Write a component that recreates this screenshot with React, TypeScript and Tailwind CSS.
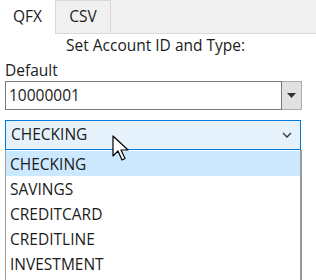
const items = ['CHECKING', 'SAVINGS', 'CREDITCARD', 'CREDITLINE', 'INVESTMENT'];

export default function App() {
  return (
    <div
      className="relative h-[280px] w-[316px] overflow-hidden bg-white text-[15.5px] text-[#1b1b1b]"
      style={{ fontFamily: '"Open Sans", "Noto Sans", sans-serif' }}
    >
      {/* Tab strip */}
      <div className="flex h-[34px] items-end border-b border-[#d9d9d9] bg-[#f0f0f0]">
        <div className="mb-[-1px] flex h-[35px] w-[55px] items-center justify-center bg-white">QFX</div>
        <div className="flex h-[33px] w-[56px] items-center justify-center border border-b-0 border-[#d9d9d9] bg-[#f0f0f0]">
          CSV
        </div>
      </div>

      <div className="flex h-[20px] items-center pl-[66px] pt-[4px]">Set Account ID and Type:</div>
      <div className="mt-[7px] flex h-[20px] items-center pl-[5px]">Default</div>

      {/* Account id combo */}
      <div className="ml-[5px] flex h-[29px] w-[297px]">
        <div className="flex flex-1 items-center border border-[#7a7a7a] bg-white pl-[3px]">10000001</div>
        <div className="flex w-[20px] items-center justify-center border border-l-0 border-[#adadad] bg-[#e1e1e1]">
          <svg width="9" height="5" viewBox="0 0 9 5">
            <path d="M0 0h9L4.5 5z" fill="#333" />
          </svg>
        </div>
      </div>

      {/* Type combo */}
      <div className="ml-[5px] mt-[10px] flex h-[30px] w-[296px] items-center justify-between border border-[#0078d7] bg-[#e5f1fb] pl-[5px] pr-[8px]">
        <span>CHECKING</span>
        <svg width="10" height="6" viewBox="0 0 10 6">
          <path d="M1 1l4 4 4-4" fill="none" stroke="#333" strokeWidth="1.3" />
        </svg>
      </div>

      {/* Open list */}
      <div className="ml-[5px] h-[140px] w-[297px] border-x border-l-[#a0a0a0] border-r-2 border-r-[#9a9a9a] bg-white pt-[1px]">
        {items.map((it, i) => (
          <div
            key={it}
            className={
              i === 0
                ? 'flex h-[25px] items-center bg-[#cce8ff] pl-[4px] pt-[2px]'
                : 'flex h-[25px] items-center pl-[4px] pt-[2px]'
            }
          >
            {it}
          </div>
        ))}
      </div>

      {/* Mouse cursor */}
      <svg className="absolute left-[112px] top-[135px]" width="18" height="27" viewBox="0 0 18 27">
        <path
          d="M1 1v20l5-5 4 9 3-1.5-4-8.5h7z"
          fill="#fff"
          stroke="#000"
          strokeWidth="1.2"
          strokeLinejoin="round"
        />
      </svg>
    </div>
  );
}
